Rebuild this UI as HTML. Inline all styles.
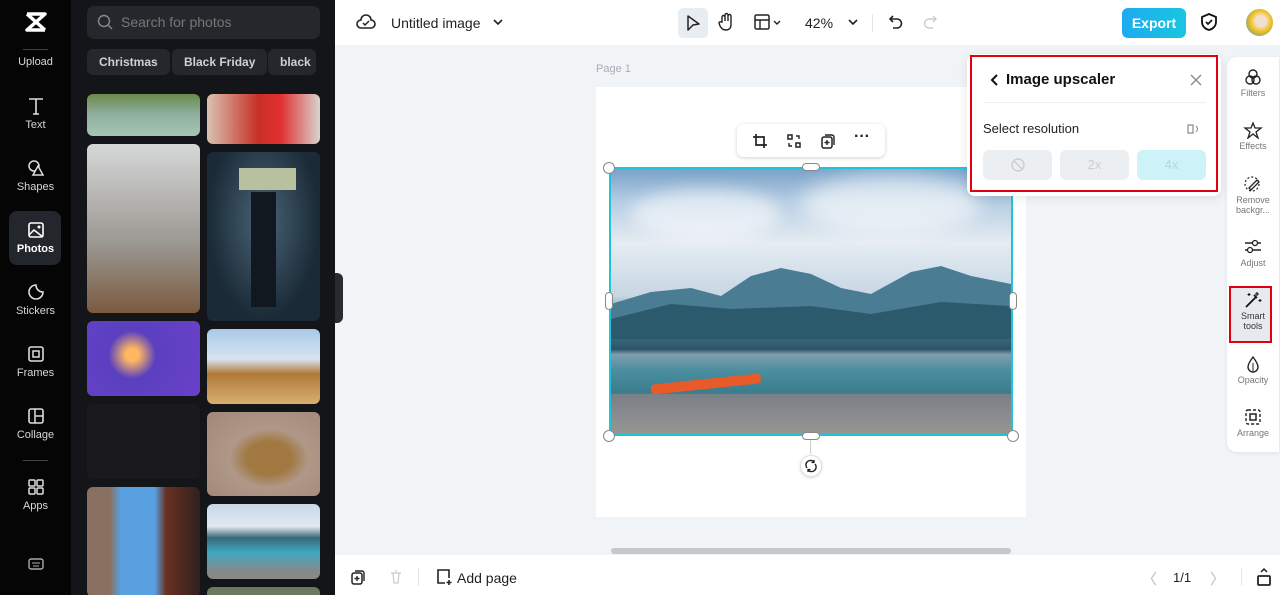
<!DOCTYPE html>
<html style="overflow:hidden;width:1280px;height:595px"><head><meta charset="utf-8"><style>
*{box-sizing:border-box;margin:0;padding:0}
body{width:1280px;height:595px;overflow:hidden;font-family:"Liberation Sans",sans-serif;background:#f1f4f7;position:relative}
.abs{position:absolute}
.rail{left:0;top:0;width:71px;height:595px;background:#050506}
.ri{position:absolute;left:0;width:71px;text-align:center;color:#d8d8dc;font-size:11px}
.ri svg{display:block;margin:0 auto 3px}
.panel{left:71px;top:0;width:264px;height:595px;background:#141519;overflow:hidden}
.ph{position:absolute;border-radius:6px;overflow:hidden}
.chip{position:absolute;top:49px;height:26px;background:#26272c;border-radius:6px;color:#d0d0d4;font-size:12px;font-weight:bold;line-height:26px;padding:0 12px}
.top{left:335px;top:0;width:945px;height:45px;background:#fff}
.tt{position:absolute;font-size:13px;color:#222}
.rt{position:absolute;left:1227px;width:52px;text-align:center;font-size:9px;color:#777}
.rt svg{display:block;margin:0 auto 2px}
</style></head><body>
<div class="abs rail"></div>
<div class="ri" style="top:10px"><svg width="26" height="24" viewBox="0 0 26 24"><path d="M4 4h18L4 20h18M4 4l18 16" stroke="#fff" stroke-width="3.5" fill="none" stroke-linejoin="round"/></svg></div>
<div class="abs" style="left:23px;top:49px;width:25px;height:1px;background:#444"></div>
<div class="ri" style="top:56px">Upload</div>
<div class="ri" style="top:96px"><svg width="20" height="20"><path d="M3 3h14M10 3v15M7 18h6" stroke="#ddd" stroke-width="1.6" fill="none"/></svg>Text</div>
<div class="ri" style="top:158px"><svg width="20" height="20"><circle cx="8" cy="8" r="5" stroke="#ddd" stroke-width="1.5" fill="none"/><path d="M12 8l5 9H7z" stroke="#ddd" stroke-width="1.5" fill="#050506"/></svg>Shapes</div>
<div class="abs" style="left:9px;top:211px;width:52px;height:54px;background:#23262d;border-radius:8px"></div>
<div class="ri" style="top:220px;color:#fff;font-weight:bold"><svg width="20" height="20"><rect x="3" y="3" width="14" height="14" rx="2" stroke="#fff" stroke-width="1.6" fill="none"/><path d="M3 15l5-5 9 7" stroke="#fff" stroke-width="1.5" fill="none"/><circle cx="13" cy="7" r="1.5" fill="#fff"/></svg>Photos</div>
<div class="ri" style="top:282px"><svg width="20" height="20"><path d="M17 10A7 7 0 1 1 10 3c0 4 3 7 7 7z" stroke="#ddd" stroke-width="1.6" fill="none"/></svg>Stickers</div>
<div class="ri" style="top:344px"><svg width="20" height="20"><rect x="3" y="3" width="14" height="14" rx="2" stroke="#ddd" stroke-width="1.6" fill="none"/><rect x="7" y="7" width="6" height="6" stroke="#ddd" stroke-width="1.5" fill="none"/></svg>Frames</div>
<div class="ri" style="top:406px"><svg width="20" height="20"><rect x="3" y="3" width="14" height="14" rx="2" stroke="#ddd" stroke-width="1.6" fill="none"/><path d="M9 3v14M9 10h8" stroke="#ddd" stroke-width="1.5"/></svg>Collage</div>
<div class="abs" style="left:23px;top:460px;width:25px;height:1px;background:#444"></div>
<div class="ri" style="top:477px"><svg width="20" height="20"><rect x="3" y="3" width="6" height="6" rx="1" stroke="#ddd" stroke-width="1.5" fill="none"/><rect x="11" y="3" width="6" height="6" rx="1" stroke="#ddd" stroke-width="1.5" fill="none"/><rect x="3" y="11" width="6" height="6" rx="1" stroke="#ddd" stroke-width="1.5" fill="none"/><rect x="11" y="11" width="6" height="6" rx="1" stroke="#ddd" stroke-width="1.5" fill="none"/></svg>Apps</div>
<div class="ri" style="top:556px"><svg width="18" height="16"><rect x="2" y="3" width="14" height="10" rx="2" stroke="#aaa" stroke-width="1.4" fill="none"/><path d="M5 7h8M6 10h6" stroke="#aaa"/></svg></div>

<div class="abs panel">
<div class="abs" style="left:16px;top:6px;width:233px;height:33px;background:#26272c;border-radius:7px;color:#777;font-size:14px;line-height:33px;padding-left:34px">Search for photos
<svg class="abs" style="left:10px;top:8px" width="16" height="16"><circle cx="7" cy="7" r="5.5" stroke="#888" stroke-width="1.4" fill="none"/><path d="M11 11l4 4" stroke="#888" stroke-width="1.4"/></svg></div>
<div class="chip" style="left:16px">Christmas</div>
<div class="chip" style="left:101px">Black Friday</div>
<div class="chip" style="left:197px;width:48px;overflow:hidden">black</div>
<div class="ph" style="left:16px;top:94px;width:113px;height:42px;background:linear-gradient(#6a8a4a,#8fb0a0 50%,#a6c4b4)"></div>
<div class="ph" style="left:136px;top:94px;width:113px;height:50px;background:linear-gradient(90deg,#d9c2b0,#c83028 45%,#e03030 65%,#d8d4d0)"></div>
<div class="ph" style="left:16px;top:144px;width:113px;height:169px;background:linear-gradient(#d6d8d8,#9a9690 60%,#7a5a40)"></div>
<div class="ph" style="left:136px;top:152px;width:113px;height:169px;background:radial-gradient(ellipse at 50% 40%,#4a6478,#1a2a36 70%)"><div class="abs" style="left:32px;top:16px;width:57px;height:22px;background:#b8c0a0"></div><div class="abs" style="left:44px;top:40px;width:25px;height:115px;background:#111820"></div></div>
<div class="ph" style="left:16px;top:321px;width:113px;height:75px;background:radial-gradient(circle at 40% 45%,#ffb860 8%,#5a40c0 30%,#6a40c8)"></div>
<div class="ph" style="left:136px;top:329px;width:113px;height:75px;background:linear-gradient(#a8c8e8,#d8e4f0 40%,#b07838 60%,#d8b070)"></div>
<div class="ph" style="left:16px;top:404px;width:113px;height:75px;background:#1a1a1c"></div>
<div class="ph" style="left:136px;top:412px;width:113px;height:84px;background:radial-gradient(ellipse at 55% 55%,#a07840 25%,#b09888 45%,#a08878)"></div>
<div class="ph" style="left:16px;top:487px;width:113px;height:110px;background:linear-gradient(90deg,#8a7060 0 20%,#58a0e0 30% 60%,#6a3020 70%,#302020)"></div>
<div class="ph" style="left:136px;top:504px;width:113px;height:75px;background:linear-gradient(#c8d8e8,#e0e8f0 30%,#3a6878 45%,#40a8c0 65%,#888 90%)"></div>
<div class="ph" style="left:136px;top:587px;width:113px;height:20px;background:#6a7a60"></div>
</div>
<div class="abs" style="left:335px;top:273px;width:8px;height:50px;background:#2a2b30;border-radius:0 6px 6px 0"></div>

<div class="abs top"></div>
<svg class="abs" style="left:356px;top:13px" width="20" height="18"><path d="M5 15a4 4 0 0 1 0-8 5 5 0 0 1 10 0 4 4 0 0 1 0 8z" stroke="#222" stroke-width="1.6" fill="none"/><path d="M7 10l2 2 4-4" stroke="#222" stroke-width="1.5" fill="none"/></svg>
<div class="tt" style="left:391px;top:15px;font-size:14px">Untitled image</div>
<svg class="abs" style="left:492px;top:17px" width="12" height="10"><path d="M2 3l4 4 4-4" stroke="#222" stroke-width="1.6" fill="none"/></svg>
<div class="abs" style="left:678px;top:8px;width:30px;height:30px;background:#e8edf2;border-radius:5px"></div>
<svg class="abs" style="left:685px;top:14px" width="16" height="18"><path d="M3 2l11 8-6 1-5 5z" stroke="#222" stroke-width="1.5" fill="none" stroke-linejoin="round"/></svg>
<svg class="abs" style="left:717px;top:12px" width="18" height="20"><path d="M5 10V5a1.5 1.5 0 0 1 3 0v4V3a1.5 1.5 0 0 1 3 0v6V4a1.5 1.5 0 0 1 3 0v9c0 3-2 5-5 5s-4-1-6-4l-1-3a1.3 1.3 0 0 1 2-1z" stroke="#222" stroke-width="1.4" fill="none"/></svg>
<svg class="abs" style="left:754px;top:14px" width="30" height="16"><rect x="1" y="1" width="14" height="14" rx="1.5" stroke="#222" stroke-width="1.5" fill="none"/><path d="M1 6h14M6 6v9" stroke="#222" stroke-width="1.4"/><path d="M20 7l3 3 3-3" stroke="#222" stroke-width="1.4" fill="none"/></svg>
<div class="tt" style="left:805px;top:15px;font-size:14px">42%</div>
<svg class="abs" style="left:847px;top:17px" width="12" height="10"><path d="M2 3l4 4 4-4" stroke="#222" stroke-width="1.6" fill="none"/></svg>
<div class="abs" style="left:872px;top:14px;width:1px;height:18px;background:#e4e6ea"></div>
<svg class="abs" style="left:888px;top:14px" width="16" height="16"><path d="M5 2L2 5l3 3M2 5h7a4 4 0 0 1 0 9H5" stroke="#222" stroke-width="1.6" fill="none"/></svg>
<svg class="abs" style="left:922px;top:14px" width="16" height="16"><path d="M11 2l3 3-3 3M14 5H7a4 4 0 0 0 0 9h4" stroke="#ccc" stroke-width="1.4" fill="none"/></svg>
<div class="abs" style="left:1122px;top:8px;width:64px;height:30px;border-radius:6px;background:linear-gradient(90deg,#1eaaf0,#19c6e0);color:#fff;font-weight:bold;font-size:14px;text-align:center;line-height:30px">Export</div>
<svg class="abs" style="left:1199px;top:12px" width="20" height="20"><path d="M10 2l7 3v5c0 4-3 7-7 8-4-1-7-4-7-8V5z" stroke="#111" stroke-width="1.8" fill="none"/><path d="M7 10l2 2 4-4" stroke="#111" stroke-width="1.7" fill="none"/></svg>
<div class="abs" style="left:1246px;top:9px;width:27px;height:27px;border-radius:50%;background:radial-gradient(circle at 55% 45%,#f4e0d0 25%,#f2c020 50%,#3090d0)"></div>

<div class="abs" style="left:596px;top:63px;font-size:11px;color:#aab">Page 1</div>
<div class="abs" style="left:596px;top:87px;width:430px;height:430px;background:#fff"></div>
<div class="abs" style="left:609px;top:167px;width:404px;height:269px;border:2px solid #20c4d8;overflow:hidden;background:linear-gradient(#7aa2c8 0%,#b4cce2 12%,#e6ecf2 28%,#d2dfea 40%,#c8d6e2 48%,#5a8aa0 56%,#3e6e86 62%,#2c5468 68%,#7f9eae 70%,#4b8ea0 76%,#3a7e90 84%,#7a7a78 90%,#8a8680 100%)">
<div class="abs" style="left:20px;top:20px;width:150px;height:50px;border-radius:50%;background:rgba(255,255,255,.55);filter:blur(8px)"></div>
<div class="abs" style="left:190px;top:5px;width:180px;height:60px;border-radius:50%;background:rgba(255,255,255,.6);filter:blur(10px)"></div>
<svg class="abs" style="left:0;top:95px" width="400" height="80" viewBox="0 0 400 80"><path d="M0 40 L40 28 80 24 110 32 140 12 170 4 200 10 230 24 260 30 300 8 330 2 360 12 400 20 V75 H0z" fill="#4a7c94"/><path d="M0 55 L60 40 120 45 200 42 260 50 330 38 400 42 V75 H0z" fill="#2b5a6c"/></svg>
<div class="abs" style="left:40px;top:210px;width:110px;height:10px;background:#e85a28;border-radius:3px;transform:rotate(-6deg)"></div>
<div class="abs" style="left:0;top:225px;width:400px;height:45px;background:linear-gradient(#7a8088,#9a9894)"></div>
</div>
<div class="abs" style="left:603px;top:162px;width:12px;height:12px;border-radius:50%;background:#fff;border:1px solid #888"></div>
<div class="abs" style="left:1007px;top:162px;width:12px;height:12px;border-radius:50%;background:#fff;border:1px solid #888"></div>
<div class="abs" style="left:603px;top:430px;width:12px;height:12px;border-radius:50%;background:#fff;border:1px solid #888"></div>
<div class="abs" style="left:1007px;top:430px;width:12px;height:12px;border-radius:50%;background:#fff;border:1px solid #888"></div>
<div class="abs" style="left:802px;top:163px;width:18px;height:8px;border-radius:4px;background:#fff;border:1px solid #888"></div>
<div class="abs" style="left:802px;top:432px;width:18px;height:8px;border-radius:4px;background:#fff;border:1px solid #888"></div>
<div class="abs" style="left:605px;top:292px;width:8px;height:18px;border-radius:4px;background:#fff;border:1px solid #888"></div>
<div class="abs" style="left:1009px;top:292px;width:8px;height:18px;border-radius:4px;background:#fff;border:1px solid #888"></div>
<div class="abs" style="left:810px;top:440px;width:1px;height:14px;background:#ccc"></div>
<div class="abs" style="left:800px;top:455px;width:22px;height:22px;border-radius:50%;background:#fff;border:1px solid #ddd;box-shadow:0 1px 3px rgba(0,0,0,.15)"></div>
<svg class="abs" style="left:804px;top:459px" width="14" height="14"><path d="M3 9a4.5 4.5 0 0 1 7-6M11 5a4.5 4.5 0 0 1-7 6" stroke="#222" stroke-width="1.4" fill="none"/><path d="M10 1v2.5h-2.5M4 13v-2.5h2.5" stroke="#222" stroke-width="1.3" fill="none"/></svg>

<div class="abs" style="left:737px;top:124px;width:148px;height:33px;background:#fff;border-radius:7px;box-shadow:0 1px 4px rgba(0,0,0,.18)"></div>
<svg class="abs" style="left:752px;top:133px" width="16" height="16"><path d="M4 1v11h11M1 4h11v11" stroke="#222" stroke-width="1.7" fill="none"/></svg>
<svg class="abs" style="left:786px;top:133px" width="16" height="16"><rect x="2" y="2" width="4" height="4" stroke="#222" stroke-width="1.5" fill="none"/><rect x="10" y="10" width="4" height="4" stroke="#222" stroke-width="1.5" fill="none"/><path d="M10 3h3v3M6 13H3v-3" stroke="#222" stroke-width="1.4" fill="none"/></svg>
<svg class="abs" style="left:820px;top:133px" width="16" height="16"><rect x="2" y="4" width="10" height="11" rx="2" stroke="#222" stroke-width="1.5" fill="none"/><path d="M5 2h7a2 2 0 0 1 2 2v8M7 7v5M4.5 9.5h5" stroke="#222" stroke-width="1.4" fill="none"/></svg>
<div class="abs" style="left:854px;top:128px;font-size:16px;font-weight:bold;color:#222">···</div>

<div class="abs" style="left:611px;top:548px;width:400px;height:6px;background:#c4c8cc;border-radius:3px"></div>
<div class="abs" style="left:335px;top:555px;width:945px;height:40px;background:#fff"></div>
<svg class="abs" style="left:350px;top:569px" width="16" height="16"><rect x="2" y="4" width="10" height="11" rx="2" stroke="#222" stroke-width="1.5" fill="none"/><path d="M5 2h7a2 2 0 0 1 2 2v8M7 7v5M4.5 9.5h5" stroke="#222" stroke-width="1.4" fill="none"/></svg>
<svg class="abs" style="left:389px;top:569px" width="14" height="16"><path d="M2 4h10M4 4l1 10h4l1-10M6 2h2" stroke="#ccc" stroke-width="1.3" fill="none"/></svg>
<div class="abs" style="left:418px;top:568px;width:1px;height:18px;background:#e4e6ea"></div>
<svg class="abs" style="left:435px;top:568px" width="18" height="18"><path d="M10 15H3V2h11v8M14 12v5M11.5 14.5h5" stroke="#222" stroke-width="1.6" fill="none"/></svg>
<div class="tt" style="left:457px;top:570px;font-size:14px">Add page</div>
<div class="tt" style="left:1142px;top:568px;color:#bbb;font-size:15px">〈</div>
<div class="tt" style="left:1173px;top:570px;font-size:13px">1/1</div>
<div class="tt" style="left:1210px;top:568px;color:#bbb;font-size:15px">〉</div>
<div class="abs" style="left:1241px;top:568px;width:1px;height:18px;background:#e4e6ea"></div>
<svg class="abs" style="left:1256px;top:567px" width="16" height="20"><path d="M5 5l3-3 3 3" stroke="#222" stroke-width="1.5" fill="none"/><rect x="2" y="9" width="12" height="9" rx="1" stroke="#222" stroke-width="1.8" fill="none"/></svg>

<div class="abs" style="left:1227px;top:57px;width:52px;height:395px;background:#fff;border-radius:10px 0 0 10px;box-shadow:0 1px 4px rgba(0,0,0,.08)"></div>
<div class="rt" style="top:68px"><svg width="20" height="18"><circle cx="10" cy="6" r="4" stroke="#222" stroke-width="1.4" fill="none"/><circle cx="7" cy="12" r="4" stroke="#222" stroke-width="1.4" fill="none"/><circle cx="13" cy="12" r="4" stroke="#222" stroke-width="1.4" fill="none"/></svg>Filters</div>
<div class="rt" style="top:121px"><svg width="20" height="18"><path d="M10 2l2 5 6 0-5 4 2 6-5-4-5 4 2-6-5-4h6z" stroke="#222" stroke-width="1.3" fill="none"/></svg>Effects</div>
<div class="rt" style="top:175px;line-height:10px"><svg width="20" height="18"><circle cx="9" cy="9" r="7" stroke="#222" stroke-width="1.2" stroke-dasharray="2 2" fill="none"/><path d="M6 13l8-8 2 2-8 8z" stroke="#222" stroke-width="1.3" fill="#fff"/></svg>Remove<br>backgr...</div>
<div class="rt" style="top:238px"><svg width="20" height="18"><path d="M2 5h16M2 12h16" stroke="#222" stroke-width="1.4"/><circle cx="12" cy="5" r="2.5" fill="#fff" stroke="#222" stroke-width="1.3"/><circle cx="7" cy="12" r="2.5" fill="#fff" stroke="#222" stroke-width="1.3"/></svg>Adjust</div>
<div class="abs" style="left:1229px;top:286px;width:43px;height:57px;background:#e6eaee;border:2px solid #e0000f"></div>
<div class="rt" style="top:291px;color:#333;line-height:10px"><svg width="20" height="18"><path d="M3 16L13 6M11 4l3 3" stroke="#111" stroke-width="1.8"/><path d="M14 1v4M12 3h4M17 8v3M15.5 9.5h3M6 2v3M4.5 3.5h3" stroke="#111" stroke-width="1.1"/></svg>Smart<br>tools</div>
<div class="rt" style="top:355px"><svg width="20" height="18"><path d="M10 2c3 4 5 7 5 10a5 5 0 0 1-10 0c0-3 2-6 5-10z" stroke="#222" stroke-width="1.4" fill="none"/><path d="M10 8v8" stroke="#222"/></svg>Opacity</div>
<div class="rt" style="top:408px"><svg width="20" height="18"><rect x="3" y="2" width="14" height="14" rx="2" stroke="#222" stroke-width="1.4" stroke-dasharray="3 2" fill="none"/><rect x="7" y="6" width="6" height="6" stroke="#222" stroke-width="1.5" fill="none"/></svg>Arrange</div>

<div class="abs" style="left:967px;top:54px;width:254px;height:142px;background:#fff;border-radius:8px;box-shadow:0 2px 10px rgba(0,0,0,.1)"></div>
<div class="abs" style="left:970px;top:55px;width:248px;height:137px;border:2px solid #e0000f"></div>
<svg class="abs" style="left:989px;top:73px" width="10" height="14"><path d="M8 2L3 7l5 5" stroke="#111" stroke-width="2" fill="none"/></svg>
<div class="abs" style="left:1006px;top:71px;font-size:15px;font-weight:bold;color:#111">Image upscaler</div>
<svg class="abs" style="left:1189px;top:73px" width="14" height="14"><path d="M2 2l10 10M12 2L2 12" stroke="#888" stroke-width="1.3"/></svg>
<div class="abs" style="left:983px;top:102px;width:223px;height:1px;background:#eef0f2"></div>
<div class="abs" style="left:983px;top:121px;font-size:13px;color:#222">Select resolution</div>
<svg class="abs" style="left:1186px;top:122px" width="14" height="14"><rect x="2" y="3" width="5" height="8" stroke="#888" stroke-width="1.2" fill="none"/><path d="M10 4c2 2 2 4 0 6" stroke="#888" fill="none"/></svg>
<div class="abs" style="left:983px;top:150px;width:69px;height:30px;background:#eceff2;border-radius:6px"></div>
<svg class="abs" style="left:1010px;top:157px" width="16" height="16"><circle cx="8" cy="8" r="6" stroke="#ccc" stroke-width="1.4" fill="none"/><path d="M4 4l8 8" stroke="#ccc" stroke-width="1.4"/></svg>
<div class="abs" style="left:1060px;top:150px;width:69px;height:30px;background:#eceff2;border-radius:6px;color:#ccc;font-size:13px;text-align:center;line-height:30px">2x</div>
<div class="abs" style="left:1137px;top:150px;width:69px;height:30px;background:#cdf2f8;border-radius:6px;color:#a8dde6;font-size:13px;text-align:center;line-height:30px">4x</div>
</body></html>
